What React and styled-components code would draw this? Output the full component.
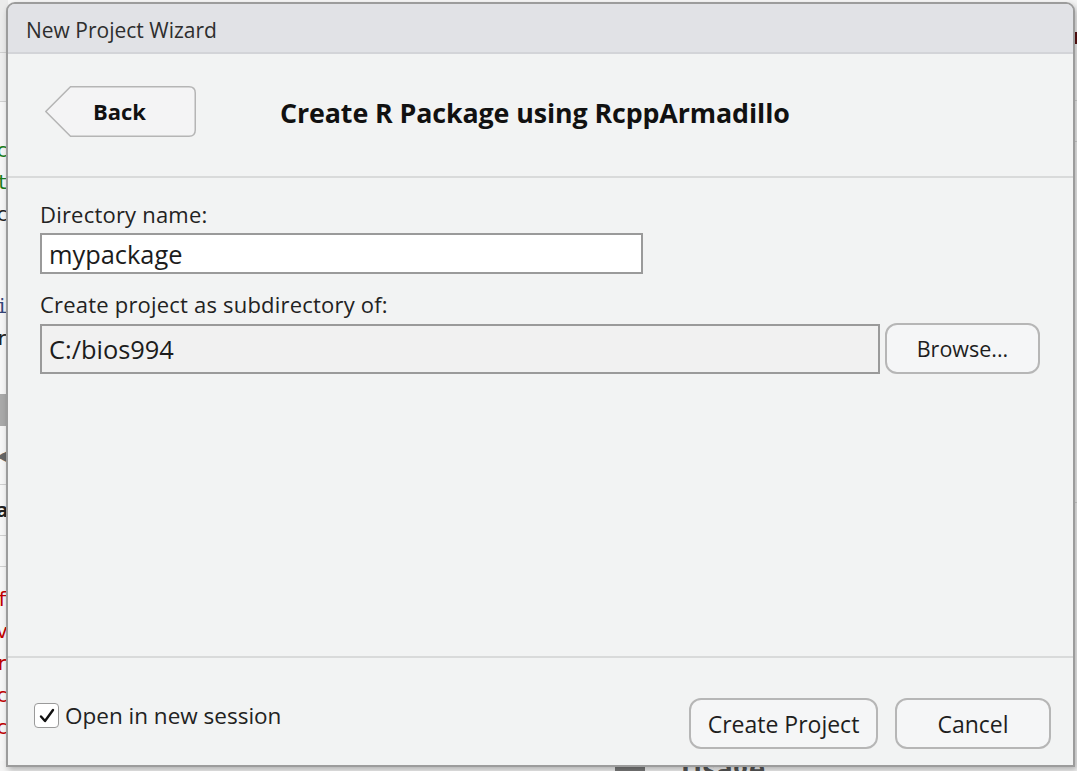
import React from "react";
import styled, { createGlobalStyle } from "styled-components";

const Global = createGlobalStyle`
  html, body { margin: 0; padding: 0; }
  body {
    width: 1077px; height: 771px; overflow: hidden;
    font-family: "Open Sans", "Noto Sans", "Liberation Sans", sans-serif;
    color: #1f1f1f;
  }
`;

const Stage = styled.div`
  position: relative;
  width: 1077px;
  height: 771px;
  overflow: hidden;
  background: #f7f7f7;
`;

/* ---- background app (mostly hidden behind the dialog) ---- */
const Backdrop = styled.div`
  display: grid;
  grid-template-columns: 8px 1fr 8px;
  grid-template-rows: 1fr 10px;
  height: 100%;
`;

const Gutter = styled.div`
  display: flex;
  flex-direction: column;
  background: #f6f6f6;
  overflow: hidden;
`;

const GutterBlock = styled.div`
  height: ${(p) => p.$h}px;
  background: ${(p) => p.$bg || "transparent"};
  border-bottom: ${(p) => (p.$line ? "1px solid #d0d0d0" : "none")};
  color: ${(p) => p.$color || "#222"};
  font: ${(p) => (p.$bold ? 700 : 400)} 20px "DejaVu Sans Mono", monospace;
  line-height: ${(p) => p.$h}px;
  white-space: nowrap;
  margin-left: -4px;
`;

const RightGutter = styled.div`
  background: #f4f4f4;
  display: flex;
  flex-direction: column;
`;

const Mark = styled.div`
  height: ${(p) => p.$h}px;
  background: ${(p) => p.$bg || "transparent"};
  border-bottom: ${(p) => (p.$line ? "1px solid #d6d6d6" : "none")};
`;

const BottomStrip = styled.div`
  grid-column: 1 / 4;
  background: #f4f4f4;
  overflow: hidden;
  display: flex;
  align-items: flex-start;
`;

const StripBlock = styled.div`
  width: 30px;
  height: 10px;
  margin-left: 615px;
  background: #7a7a7a;
`;

const StripText = styled.div`
  margin-left: 36px;
  margin-top: -7px;
  font: 700 28px "Open Sans", sans-serif;
  color: #555;
  line-height: 28px;
`;

/* ---- dialog ---- */
const Dialog = styled.div`
  position: absolute;
  left: 6px;
  top: 2px;
  width: 1069px;
  height: 765px;
  box-sizing: border-box;
  border: 2px solid #9c9c9c;
  border-radius: 9px 9px 0 0;
  background: #f2f3f3;
  box-shadow: 2px 3px 6px rgba(0, 0, 0, 0.28);
  display: flex;
  flex-direction: column;
  overflow: hidden;
`;

const TitleBar = styled.div`
  height: 50px;
  flex: none;
  display: flex;
  align-items: center;
  padding: 4px 0 0 18px;
  box-sizing: border-box;
  background: #e1e2e6;
  border-bottom: 2px solid #d3d4d8;
  font-size: 21px;
  color: #2e2e2e;
`;

const Header = styled.div`
  height: 124px;
  flex: none;
  box-sizing: border-box;
  display: flex;
  align-items: center;
  gap: 84px;
  padding: 0 0 8px 37px;
  border-bottom: 2px solid #d9dada;
`;

const BackButton = styled.button`
  position: relative;
  width: 151px;
  height: 51px;
  padding: 0;
  border: none;
  background: transparent;
  font: 700 22px "Open Sans", sans-serif;
  color: #111;
  display: flex;
  align-items: center;
  justify-content: center;
  cursor: pointer;

  svg {
    position: absolute;
    inset: 0;
  }
  span {
    position: relative;
    padding-right: 2px;
  }
`;

const PageTitle = styled.h1`
  margin: 3px 0 0;
  font: 700 26.8px "Open Sans", sans-serif;
  color: #111;
  letter-spacing: -0.1px;
`;

const Form = styled.div`
  flex: 1;
  display: flex;
  flex-direction: column;
  padding: 22px 33px 0 32px;
  border-bottom: 2px solid #d9dada;
`;

const Label = styled.label`
  font-size: 22px;
  letter-spacing: 0.2px;
  line-height: 28px;
  color: #222;
  margin-bottom: 5px;
`;

const TextInput = styled.div`
  box-sizing: border-box;
  width: ${(p) => p.$w};
  height: ${(p) => p.$h}px;
  border: 2px solid #9a9a9a;
  background: ${(p) => (p.$disabled ? "#f1f1f1" : "#ffffff")};
  display: flex;
  align-items: center;
  padding-left: 7px;
  font-size: 25.4px;
  color: #1c1c1c;
`;

const Row = styled.div`
  display: flex;
  align-items: center;
  gap: 5px;
  margin-bottom: ${(p) => p.$mb || 0}px;
`;

const Button = styled.button`
  box-sizing: border-box;
  width: ${(p) => p.$w}px;
  height: ${(p) => p.$h}px;
  border: 2px solid #b6b6b6;
  border-radius: 12px;
  background: #f5f6f7;
  font: 400 ${(p) => p.$fs || 23}px "Open Sans", sans-serif;
  color: #1e1e1e;
  flex: none;
  padding: 0;
`;

const Footer = styled.div`
  height: 107px;
  flex: none;
  box-sizing: border-box;
  display: flex;
  align-items: center;
  padding: 24px 22px 0 26px;
`;

const Check = styled.label`
  display: flex;
  align-items: center;
  gap: 6px;
  font-size: 22.5px;
  color: #222;
  margin-top: -16px;
`;

const Box = styled.span`
  box-sizing: border-box;
  width: 25px;
  height: 25px;
  border: 1.5px solid #9a9a9a;
  border-radius: 4px;
  background: #fff;
  display: flex;
  align-items: center;
  justify-content: center;
`;

const Spacer = styled.div`
  flex: 1;
`;

const FooterButtons = styled.div`
  display: flex;
  gap: 17px;
`;

export default function App() {
  return (
    <Stage>
      <Global />
      <Backdrop>
        <Gutter>
          <GutterBlock $h={52} $bg="#ebebeb" $line>
            &nbsp;&nbsp;&nbsp;b
          </GutterBlock>
          <GutterBlock $h={48} $bg="#eeeeee" $line />
          <GutterBlock $h={32} />
          <GutterBlock $h={32} $color="#1a7d1a">c</GutterBlock>
          <GutterBlock $h={32} $color="#1a7d1a">t</GutterBlock>
          <GutterBlock $h={32}>c</GutterBlock>
          <GutterBlock $h={60} />
          <GutterBlock $h={32} $color="#35457a">i</GutterBlock>
          <GutterBlock $h={32}>r</GutterBlock>
          <GutterBlock $h={40} />
          <GutterBlock $h={32} $bg="#a9a9a9" />
          <GutterBlock $h={58} $line $color="#666">◀</GutterBlock>
          <GutterBlock $h={50} $line $bold>a</GutterBlock>
          <GutterBlock $h={30} $line />
          <GutterBlock $h={16} />
          <GutterBlock $h={32} $color="#c00000">f</GutterBlock>
          <GutterBlock $h={32} $color="#c00000">v</GutterBlock>
          <GutterBlock $h={32} $color="#c00000">r</GutterBlock>
          <GutterBlock $h={32} $color="#c00000">c</GutterBlock>
          <GutterBlock $h={32} $color="#c00000">c</GutterBlock>
        </Gutter>
        <div />
        <RightGutter>
          <Mark $h={32} />
          <Mark $h={12} $bg="#5a1010" />
          <Mark $h={56} $line />
          <Mark $h={40} $line />
          <Mark $h={360} $line />
        </RightGutter>
        <BottomStrip>
          <StripBlock />
          <StripText>Usage</StripText>
        </BottomStrip>
      </Backdrop>

      <Dialog>
        <TitleBar>New Project Wizard</TitleBar>
        <Header>
          <BackButton>
            <svg width="151" height="51" viewBox="0 0 151 51">
              <path
                d="M25.5 0.75 L144 0.75 Q150.25 0.75 150.25 7 L150.25 44 Q150.25 50.25 144 50.25 L25.5 50.25 L0.8 25.5 Z"
                fill="#f4f4f5"
                stroke="#b5b5b5"
                strokeWidth="1.5"
              />
            </svg>
            <span>Back</span>
          </BackButton>
          <PageTitle>Create R Package using RcppArmadillo</PageTitle>
        </Header>
        <Form>
          <Label>Directory name:</Label>
          <Row $mb={16}>
            <TextInput $w="603px" $h={41}>mypackage</TextInput>
          </Row>
          <Label>Create project as subdirectory of:</Label>
          <Row>
            <TextInput $w="841px" $h={50} $disabled>
              C:/bios994
            </TextInput>
            <Button $w={155} $h={51} $fs={21.5}>Browse...</Button>
          </Row>
        </Form>
        <Footer>
          <Check>
            <Box>
              <svg width="18" height="18" viewBox="0 0 18 18">
                <path
                  d="M3 9.5 L7 14 L15 3"
                  fill="none"
                  stroke="#111"
                  strokeWidth="2.4"
                  strokeLinecap="round"
                  strokeLinejoin="round"
                />
              </svg>
            </Box>
            Open in new session
          </Check>
          <Spacer />
          <FooterButtons>
            <Button $w={189} $h={51}>Create Project</Button>
            <Button $w={156} $h={51}>Cancel</Button>
          </FooterButtons>
        </Footer>
      </Dialog>
    </Stage>
  );
}
